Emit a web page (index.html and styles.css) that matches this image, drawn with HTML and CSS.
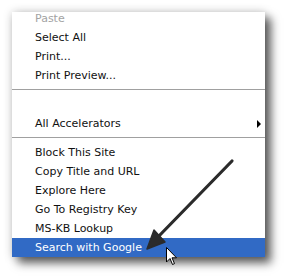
FILE: index.html
```html
<!DOCTYPE html>
<html>
<head>
<meta charset="utf-8">
<link rel="stylesheet" href="styles.css">
</head>
<body>
<div class="stage">
  <div class="menu">
    <div class="item item-first disabled">Paste</div>
    <div class="item">Select All</div>
    <div class="item">Print...</div>
    <div class="item">Print Preview...</div>
    <div class="sep"></div>
    <div class="item"></div>
    <div class="item has-sub">All Accelerators<span class="sub-arrow"></span></div>
    <div class="sep"></div>
    <div class="item">Block This Site</div>
    <div class="item">Copy Title and URL</div>
    <div class="item">Explore Here</div>
    <div class="item">Go To Registry Key</div>
    <div class="item">MS-KB Lookup</div>
    <div class="item active">Search with Google</div>
  </div>
  <svg class="pointer-arrow" width="285" height="277" viewBox="0 0 285 277">
    <line x1="232" y1="161" x2="157" y2="238" stroke="#2b2b2b" stroke-width="3.2" stroke-linecap="round"/>
    <polygon points="147,249 165,242 154,230" fill="#2b2b2b" stroke="#2b2b2b" stroke-width="1.5" stroke-linejoin="round"/>
  </svg>
  <svg class="cursor" width="12" height="19" viewBox="0 0 12 19">
    <path d="M0.5 0.5 L0.5 15 L4 11.5 L6.5 17.5 L8.5 16.6 L6 10.8 L10.5 10.8 Z" fill="#fff" stroke="#000" stroke-width="1" stroke-linejoin="miter"/>
  </svg>
</div>
</body>
</html>
```
FILE: styles.css
```css
html, body {
  margin: 0;
  padding: 0;
  background: #fff;
}
.stage {
  position: relative;
  width: 285px;
  height: 277px;
  overflow: hidden;
}
.menu {
  margin: 12px 0 0 12px;
  width: 253px;
  height: 245px;
  background: #fff;
  box-shadow: 6px 6px 9px rgba(0, 0, 0, 0.62), 0 0 9px rgba(0, 0, 0, 0.2);
  font-family: "DejaVu Sans", sans-serif;
  font-size: 11px;
  color: #111;
  overflow: hidden;
}
.item {
  position: relative;
  height: 19px;
  line-height: 19px;
  padding-left: 23px;
  white-space: nowrap;
}
.item-first {
  height: 16px;
  line-height: 13px;
}
.disabled {
  color: #a3a3a3;
}
.sep {
  height: 10px;
  display: flex;
  align-items: center;
  padding-bottom: 1px;
  box-sizing: border-box;
}
.sep::before {
  content: "";
  display: block;
  width: 100%;
  height: 1px;
  background: #a0a0a0;
}
.active {
  background: #316ac5;
  color: #fff;
}
.sub-arrow {
  position: absolute;
  right: 4px;
  top: 6px;
  width: 0;
  height: 0;
  border-top: 4px solid transparent;
  border-bottom: 4px solid transparent;
  border-left: 4px solid #000;
}
.pointer-arrow {
  position: absolute;
  left: 0;
  top: 0;
}
.cursor {
  position: absolute;
  left: 166px;
  top: 247px;
}
```
